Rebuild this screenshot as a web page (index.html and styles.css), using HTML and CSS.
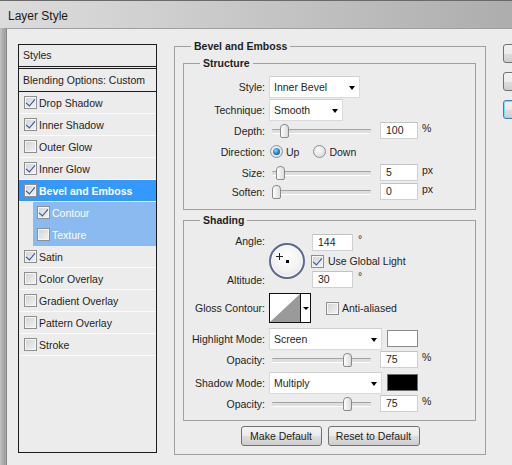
FILE: index.html
```html
<!DOCTYPE html>
<html lang="en">
<head>
    <meta charset="UTF-8">
    <title>Layer Style</title>
    <link rel="stylesheet" href="styles.css">
</head>
<body>
<div class="window">
    <div class="titlebar">Layer Style</div>

    <div class="dialog">
        <!-- effect list -->
        <div class="style-list">
            <div class="list-head">Styles</div>
            <div class="list-blend">Blending Options: Custom</div>
            <div class="list-item"><span class="check on"></span>Drop Shadow</div>
            <div class="list-item"><span class="check on"></span>Inner Shadow</div>
            <div class="list-item"><span class="check"></span>Outer Glow</div>
            <div class="list-item"><span class="check on"></span>Inner Glow</div>
            <div class="list-item selected"><span class="check on"></span>Bevel and Emboss</div>
            <div class="list-item sub"><span class="check on"></span>Contour</div>
            <div class="list-item sub"><span class="check"></span>Texture</div>
            <div class="list-item"><span class="check on"></span>Satin</div>
            <div class="list-item"><span class="check"></span>Color Overlay</div>
            <div class="list-item"><span class="check"></span>Gradient Overlay</div>
            <div class="list-item"><span class="check"></span>Pattern Overlay</div>
            <div class="list-item"><span class="check"></span>Stroke</div>
        </div>

        <!-- settings -->
        <fieldset class="group main">
            <legend>Bevel and Emboss</legend>

            <fieldset class="group inner structure">
                <legend>Structure</legend>
                <div class="row row-select">
                    <span class="label">Style:</span>
                    <div class="select select-style">Inner Bevel</div>
                </div>
                <div class="row row-select">
                    <span class="label">Technique:</span>
                    <div class="select select-technique">Smooth</div>
                </div>
                <div class="row row-slider">
                    <span class="label">Depth:</span>
                    <div class="slider"><span class="thumb" style="left: 8px"></span></div>
                    <div class="num">100</div><span class="unit">%</span>
                </div>
                <div class="row row-select">
                    <span class="label">Direction:</span>
                    <span class="radio on"></span><span class="radio-text">Up</span>
                    <span class="radio down"></span><span class="radio-text">Down</span>
                </div>
                <div class="row row-slider">
                    <span class="label">Size:</span>
                    <div class="slider"><span class="thumb" style="left: 4px"></span></div>
                    <div class="num">5</div><span class="unit">px</span>
                </div>
                <div class="row row-slider">
                    <span class="label">Soften:</span>
                    <div class="slider"><span class="thumb" style="left: 0px"></span></div>
                    <div class="num">0</div><span class="unit">px</span>
                </div>
            </fieldset>

            <fieldset class="group inner shading">
                <legend>Shading</legend>
                <div class="angle-block">
                    <div class="angle-labels">
                        <span>Angle:</span>
                        <span>Altitude:</span>
                    </div>
                    <div class="dial">
                        <span class="cross-h"></span>
                        <span class="cross-v"></span>
                        <span class="dial-dot"></span>
                    </div>
                    <div class="angle-fields">
                        <div class="field-line"><div class="num num-angle">144</div><span class="degree">°</span></div>
                        <div class="global-light"><span class="check on"></span><span class="check-text">Use Global Light</span></div>
                        <div class="field-line"><div class="num num-angle">30</div><span class="degree">°</span></div>
                    </div>
                </div>
                <div class="row row-gloss">
                    <span class="label">Gloss Contour:</span>
                    <div class="contour">
                        <svg width="30" height="28" viewBox="0 0 30 28">
                            <polygon points="0,28 30,0 30,28" fill="#9a9a9a"/>
                        </svg>
                        <span class="contour-drop"><span class="arrow"></span></span>
                    </div>
                    <span class="check anti"></span><span class="check-text">Anti-aliased</span>
                </div>
                <div class="row row-select mode-row">
                    <span class="label">Highlight Mode:</span>
                    <div class="select select-mode">Screen</div>
                    <span class="swatch white"></span>
                </div>
                <div class="row row-slider">
                    <span class="label">Opacity:</span>
                    <div class="slider"><span class="thumb" style="left: 71px"></span></div>
                    <div class="num">75</div><span class="unit">%</span>
                </div>
                <div class="row row-select mode-row shadow-row">
                    <span class="label">Shadow Mode:</span>
                    <div class="select select-mode">Multiply</div>
                    <span class="swatch black"></span>
                </div>
                <div class="row row-slider">
                    <span class="label">Opacity:</span>
                    <div class="slider"><span class="thumb" style="left: 71px"></span></div>
                    <div class="num">75</div><span class="unit">%</span>
                </div>
            </fieldset>

            <div class="default-buttons">
                <button class="btn btn-make">Make Default</button>
                <button class="btn btn-reset">Reset to Default</button>
            </div>
        </fieldset>

        <!-- OK / Cancel / New Style, mostly off the right edge -->
        <div class="side-buttons">
            <button class="btn side-btn" aria-label="OK"></button>
            <button class="btn side-btn" aria-label="Cancel"></button>
            <button class="btn side-btn focused" aria-label="New Style"></button>
        </div>
    </div>
</div>
</body>
</html>
```

FILE: styles.css
```css
* {
    box-sizing: border-box;
}
body {
    margin: 0;
    font-family: "Liberation Sans", Arial, sans-serif;
    font-size: 10.5px;
    color: #1e1e1e;
}
.window {
    width: 512px;
    height: 465px;
    overflow: hidden;
    display: flex;
    flex-direction: column;
    background: linear-gradient(to right, #c2c2c2, #a4a4a4 4px, #9a9a9a);
}
.titlebar {
    height: 28px;
    flex-shrink: 0;
    padding: 2px 0 0 8px;
    line-height: 26px;
    font-size: 12px;
    color: #1a1a1a;
    border-top: 1px solid #6a6a6a;
    background: linear-gradient(to right, #dcdcdc 0%, #d2d2d2 25%, #bcbcbc 70%, #adadad 100%);
}
.dialog {
    flex: 1;
    display: flex;
    align-items: flex-start;
    margin-left: 6px;
    padding: 10px 0 0 11px;
    background: #ececec;
    border-left: 1px solid #858585;
    border-top: 1px solid #a0a0a0;
}

/* effect list */
.style-list {
    width: 139px;
    height: 409px;
    flex-shrink: 0;
    margin: 5px 17px 0 0;
    border: 1px solid #1c1c1c;
}
.list-head {
    height: 24px;
    line-height: 21px;
    padding-left: 4px;
    border-bottom: 3px double #1c1c1c;
}
.list-blend {
    height: 23px;
    line-height: 22px;
    padding-left: 4px;
    border-bottom: 1px solid #1c1c1c;
}
.list-item {
    height: 22px;
    display: flex;
    align-items: center;
    padding-left: 5px;
    border-bottom: 1px solid #fbfbfb;
}
.list-item .check {
    margin-right: 2px;
}
.list-item.selected {
    background: #3399ff;
    color: #fff;
    font-weight: bold;
}
.list-item.sub {
    margin-left: 14px;
    padding-left: 4px;
    background: #8abaf0;
    color: #fff;
    border-bottom-color: #8abaf0;
}

/* checkboxes and radios */
.check {
    position: relative;
    width: 13px;
    height: 13px;
    flex-shrink: 0;
    border: 1px solid #8e8f8f;
    background: linear-gradient(135deg, #cfd2d6 0%, #f4f4f4 100%);
    box-shadow: inset 0 0 0 1px #f6f6f6;
}
.check.on::after {
    content: "";
    position: absolute;
    left: 3px;
    top: 0;
    width: 4px;
    height: 8px;
    border: solid #2f4b8e;
    border-width: 0 1.6px 1.6px 0;
    transform: rotate(40deg);
}
.check-text {
    margin-left: 3px;
}
.radio {
    position: relative;
    width: 13px;
    height: 13px;
    flex-shrink: 0;
    margin-left: 1px;
    border-radius: 50%;
    border: 1px solid #8e8f8f;
    background: radial-gradient(circle at 40% 35%, #fbfbfb, #d6d6d6);
}
.radio.on::after {
    content: "";
    position: absolute;
    left: 2px;
    top: 2px;
    width: 7px;
    height: 7px;
    border-radius: 50%;
    background: radial-gradient(circle at 40% 35%, #8ad6fb, #1c74b8 60%, #0c3b70);
}
.radio.down {
    margin-left: 14px;
}
.radio-text {
    margin-left: 3px;
}

/* group boxes */
fieldset.group {
    margin: 0;
    padding: 0;
    min-width: 0;
    border: 1px solid #a0a0a0;
}
.group legend {
    margin-left: 16px;
    padding: 0 3px;
    font-weight: bold;
    line-height: 14px;
}
fieldset.main {
    width: 312px;
    flex-shrink: 0;
    padding: 0 0 8px 0;
}
fieldset.inner {
    margin: 3px 9px 0 8px;
}
fieldset.structure {
    padding: 5px 0 8px 0;
}
fieldset.shading {
    padding: 7px 0 7px 0;
}

/* form rows */
.row {
    display: flex;
    align-items: center;
}
.row-select {
    height: 23px;
}
.row-slider {
    height: 19px;
}
.label {
    width: 81px;
    flex-shrink: 0;
    margin-right: 4px;
    text-align: right;
}
.select {
    position: relative;
    height: 22px;
    padding-left: 4px;
    line-height: 20px;
    background: #fff;
    border: 1px solid #dadada;
    border-top-color: #cfcfcf;
}
.select::after {
    content: "";
    position: absolute;
    right: 4px;
    top: 9px;
    border-left: 3.5px solid transparent;
    border-right: 3.5px solid transparent;
    border-top: 4px solid #000;
}
.select-style {
    width: 91px;
}
.select-technique {
    width: 74px;
}
.select-mode {
    width: 113px;
}
.slider {
    position: relative;
    width: 99px;
    height: 15px;
    margin-left: 3px;
}
.slider::before {
    content: "";
    position: absolute;
    left: 0;
    right: 0;
    top: 6px;
    height: 3px;
    background: #dedede;
    border-top: 1px solid #a3a3a3;
    border-bottom: 1px solid #fff;
    border-radius: 1px;
}
.thumb {
    position: absolute;
    top: 1px;
    width: 9px;
    height: 14px;
    border: 1px solid #8a8a8a;
    border-radius: 4px 4px 2px 2px;
    background: linear-gradient(to right, #fdfdfd, #dcdcdc);
}
.num {
    width: 38px;
    height: 17px;
    margin-left: 9px;
    padding-left: 5px;
    line-height: 15px;
    background: #fff;
    border: 1px solid #d0d0d0;
    border-top-color: #c2c2c2;
}
.unit {
    margin-left: 4px;
    align-self: flex-start;
    margin-top: 1px;
}

/* angle / altitude */
.angle-block {
    display: flex;
    align-items: center;
    height: 54px;
}
.angle-labels {
    width: 81px;
    margin-right: 4px;
    align-self: stretch;
    display: flex;
    flex-direction: column;
    justify-content: space-between;
    text-align: right;
    line-height: 15px;
}
.dial {
    position: relative;
    width: 36px;
    height: 36px;
    flex-shrink: 0;
    border-radius: 50%;
    border: 2px solid #5b6b8c;
    background: radial-gradient(circle at 50% 40%, #ffffff, #f3f3f3 50%, #dcdcdc);
    box-shadow: inset 0 0 0 1px #fff;
}
.cross-h {
    position: absolute;
    left: 5px;
    top: 11px;
    width: 7px;
    height: 1px;
    background: #222;
}
.cross-v {
    position: absolute;
    left: 8px;
    top: 8px;
    width: 1px;
    height: 7px;
    background: #222;
}
.dial-dot {
    position: absolute;
    left: 15px;
    top: 15px;
    width: 3px;
    height: 3px;
    background: #000;
}
.angle-fields {
    margin-left: 7px;
    display: flex;
    flex-direction: column;
}
.field-line {
    display: flex;
    align-items: flex-start;
    height: 17px;
}
.num-angle {
    width: 41px;
    margin-left: 0;
}
.degree {
    margin-left: 5px;
    line-height: 10px;
}
.global-light {
    display: flex;
    align-items: center;
    height: 20px;
    margin-left: -1px;
}
.global-light .check-text {
    margin-left: 4px;
}

/* gloss contour */
.row-gloss {
    height: 30px;
    margin-top: 5px;
}
.contour {
    display: flex;
    width: 42px;
    height: 30px;
    border: 1px solid #111;
    background: #fff;
}
.contour svg {
    display: block;
}
.contour-drop {
    flex: 1;
    display: flex;
    align-items: center;
    justify-content: center;
    border-left: 1px solid #111;
}
.arrow {
    border-left: 3px solid transparent;
    border-right: 3px solid transparent;
    border-top: 3px solid #000;
}
.check.anti {
    margin-left: 15px;
}

/* highlight / shadow */
.mode-row {
    margin-top: 4px;
}
.shadow-row {
    margin-top: 2px;
}
.swatch {
    width: 31px;
    height: 17px;
    margin-left: 5px;
    border: 1px solid #8a8a8a;
}
.swatch.white {
    background: #fff;
}
.swatch.black {
    background: #000;
    border-color: #6f6f6f;
}

/* buttons */
.btn {
    height: 20px;
    padding: 0;
    font: inherit;
    color: #1e1e1e;
    border: 1px solid #707070;
    border-radius: 3px;
    background: linear-gradient(#f2f2f2 0%, #ebebeb 50%, #dddddd 51%, #cfcfcf 100%);
}
.default-buttons {
    display: flex;
    justify-content: center;
    gap: 6px;
    margin-top: 5px;
}
.btn-make {
    width: 81px;
}
.btn-reset {
    width: 92px;
}
.side-buttons {
    flex-shrink: 0;
    display: flex;
    flex-direction: column;
    gap: 9px;
    margin: 5px 0 0 17px;
}
.side-btn {
    width: 90px;
    height: 19px;
}
.side-btn.focused {
    border-color: #3c7fb1;
    box-shadow: inset 0 0 0 1px #7fdcf7;
}
```
